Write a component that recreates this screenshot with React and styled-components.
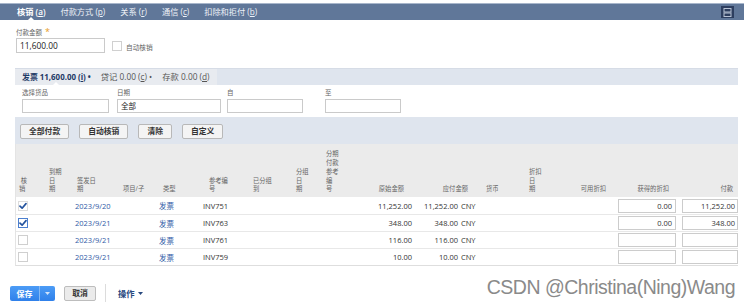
import React from 'react';
import styled, { createGlobalStyle } from 'styled-components';

const FONT = `"Open Sans", "Noto Sans CJK SC", sans-serif`;

const GlobalStyle = createGlobalStyle`
  html, body { margin: 0; padding: 0; background: #fff; }
  body { font-family: ${FONT}; color: #333; }
  * { box-sizing: border-box; }
  u { text-underline-offset: 1px; }
`;

const Page = styled.div`
  position: relative;
  width: 750px;
  height: 307px;
  padding-top: 3px;
  overflow: hidden;
`;

const TabBar = styled.div`
  display: flex;
  align-items: center;
  gap: 15px;
  height: 17px;
  margin-right: 6px;
  padding-left: 17px;
  background: #607799;
  border-top: 1px solid #a8b6cb;
`;

const Tab = styled.span`
  position: relative;
  font-size: 8.2px;
  line-height: 16px;
  white-space: nowrap;
  color: ${p => (p.$active ? '#ffffff' : '#eef2f8')};
  font-weight: ${p => (p.$active ? 600 : 400)};
  &::after {
    content: '';
    display: ${p => (p.$active ? 'block' : 'none')};
    position: absolute;
    left: 50%;
    bottom: 0;
    margin-left: -3px;
    border: 3px solid transparent;
    border-bottom-color: #fff;
  }
`;

const MenuButton = styled.div`
  margin-left: auto;
  margin-right: 10px;
  width: 13px;
  height: 12px;
  background: #2d3e5f;
  display: flex;
  align-items: center;
  justify-content: center;
`;

const Content = styled.div`
  padding: 0 12px 0 15px;
`;

const FormSection = styled.div`
  padding: 7px 0 15px 1px;
`;

const FieldLabel = styled.div`
  font-size: 6.5px;
  line-height: 9px;
  color: #666;
  white-space: nowrap;
`;

const Star = styled.span`
  color: #e89a1c;
  font-size: 9px;
  margin-left: 3px;
`;

const AmountRow = styled.div`
  display: flex;
  align-items: center;
  margin-top: 1px;
`;

const AmountInput = styled.div`
  width: 89px;
  height: 15px;
  border: 1px solid #cacaca;
  padding: 0 3px;
  font-size: 8.4px;
  line-height: 13px;
  color: #222;
`;

const PlainBox = styled.div`
  width: 10px;
  height: 10px;
  border: 1px solid #d0d0d0;
  margin-left: 7px;
  background: #fff;
`;

const CheckLabel = styled.span`
  font-size: 6.7px;
  color: #666;
  margin-left: 4px;
  margin-top: 2px;
`;

const SubSection = styled.div`
  border-top: 1px solid #d6dce6;
  background: #dfe5ee;
`;

const SubTabRow = styled.div`
  display: flex;
  height: 16px;
`;

const SubTabs = styled.div`
  display: flex;
  align-items: center;
  gap: 10px;
  width: 202px;
  padding-left: 7px;
  background: #e8ebf0;
`;

const SubTab = styled.span`
  position: relative;
  font-size: ${p => (p.$active ? 7.9 : 8.3)}px;
  line-height: 16px;
  white-space: nowrap;
  color: ${p => (p.$active ? '#1f3a66' : '#555')};
  font-weight: ${p => (p.$active ? 700 : 400)};
  &::after {
    content: '';
    display: ${p => (p.$active ? 'block' : 'none')};
    position: absolute;
    left: 50%;
    bottom: 0;
    margin-left: -3px;
    border: 3px solid transparent;
    border-bottom-color: #fff;
  }
`;

const FilterArea = styled.div`
  display: grid;
  grid-template-columns: 95px 110px 98px 76px;
  padding: 3px 0 4px 7px;
  background: #fff;
`;

const FilterField = styled.div`
  display: flex;
  flex-direction: column;
  gap: 2px;
`;

const FilterInput = styled.div`
  width: ${p => p.$w}px;
  height: 14px;
  border: 1px solid #cacaca;
  padding: 0 3px;
  font-size: 7.5px;
  line-height: 12px;
  color: #222;
`;

const ButtonRow = styled.div`
  display: flex;
  gap: 10px;
  padding: 7px 0 5px 5px;
`;

const GrayButton = styled.button`
  height: 15px;
  padding: 0 8px;
  font-family: ${FONT};
  font-size: 7.8px;
  font-weight: 600;
  color: #333;
  background: #f4f4f4;
  border: 1px solid #b8b8b8;
  border-radius: 2px;
  line-height: 13px;
`;

const COLS = '30px 26px 47px 36px 44px 46px 47px 30px 39px 52px 48px 60px 40px 52px 65px 61px';

const Table = styled.div`
  width: 723px;
  border-left: 1px solid #e4e4e4;
  border-bottom: 1px solid #dedede;
`;

const HeadRow = styled.div`
  display: grid;
  grid-template-columns: ${COLS};
  align-items: end;
  height: 53px;
  padding-bottom: 3px;
  background: #ebebeb;
`;

const HeadCell = styled.div`
  font-size: 6.3px;
  line-height: 8.7px;
  color: #666;
  white-space: nowrap;
  text-align: ${p => (p.$right ? 'right' : 'left')};
  padding-left: ${p => p.$pl || 0}px;
  padding-right: ${p => p.$pr || 0}px;
  margin-right: ${p => p.$mr || 0}px;
`;

const Row = styled.div`
  display: grid;
  grid-template-columns: ${COLS};
  align-items: center;
  height: 17px;
  background: #fff;
  border-top: ${p => (p.$first ? 'none' : '1px solid #e8e8e8')};
`;

const Cell = styled.div`
  font-size: 7.5px;
  white-space: nowrap;
  color: ${p => (p.$link ? '#2f5aa6' : '#333')};
  text-align: ${p => (p.$right ? 'right' : 'left')};
  padding-left: ${p => p.$pl || 0}px;
  padding-right: ${p => p.$pr || 0}px;
`;

const RowBox = styled.div`
  width: 10px;
  height: 10px;
  margin-left: 2px;
  border: 1px solid ${p => (p.$focus ? '#4b7fcf' : p.$checked ? '#dcdcdc' : '#cfcfcf')};
  background: #fff;
  display: flex;
  align-items: center;
  justify-content: center;
`;

const AmountBox = styled.div`
  width: ${p => p.$w}px;
  height: 14px;
  margin-left: ${p => p.$ml}px;
  border: 1px solid #cccccc;
  background: #fff;
  padding-right: ${p => p.$pr}px;
  font-size: 7.5px;
  line-height: 12px;
  text-align: right;
  color: #333;
`;

const Footer = styled.div`
  display: flex;
  align-items: center;
  height: 22px;
  margin-top: 16px;
  padding-left: 10px;
`;

const SaveButton = styled.div`
  display: flex;
  height: 15px;
  width: 45px;
  border-radius: 2px;
  background: linear-gradient(#4c9cf6, #2f80ea);
  color: #fff;
  font-size: 8px;
  font-weight: 600;
  overflow: hidden;
`;

const SaveMain = styled.span`
  width: 30px;
  text-align: center;
  line-height: 15px;
  border-right: 1px solid #86b9f5;
`;

const SaveArrow = styled.span`
  flex: 1;
  display: flex;
  align-items: center;
  justify-content: center;
`;

const CancelButton = styled.div`
  margin-left: 9px;
  width: 32px;
  height: 15px;
  border: 1px solid #bdbdbd;
  border-radius: 2px;
  background: #ebebeb;
  font-size: 7.8px;
  font-weight: 600;
  line-height: 13px;
  text-align: center;
  color: #333;
`;

const Separator = styled.div`
  margin-left: 9px;
  width: 1px;
  height: 18px;
  background: #dcdcdc;
`;

const ActionMenu = styled.div`
  margin-left: 12px;
  display: flex;
  align-items: center;
  gap: 3px;
  font-size: 8.3px;
  font-weight: 600;
  color: #28497f;
`;

const Watermark = styled.div`
  position: absolute;
  right: 15px;
  top: 278px;
  font-family: "Liberation Sans", Arial, sans-serif;
  font-size: 19.5px;
  letter-spacing: -0.5px;
  line-height: 1;
  color: #8a8a8a;
  white-space: nowrap;
`;

const Check = ({ color = '#24539e' }) => (
  <svg width="8" height="8" viewBox="0 0 8 8">
    <path d="M1 4.2 L3.1 6.2 L7 1.6" fill="none" stroke={color} strokeWidth="1.7" strokeLinecap="round" strokeLinejoin="round" />
  </svg>
);

const Caret = ({ color }) => (
  <svg width="5" height="3" viewBox="0 0 5 3">
    <path d="M0 0 H5 L2.5 3 Z" fill={color} />
  </svg>
);

const headers = [
  { lines: ['\u00a0核', '销'], pl: 3 },
  { lines: ['到期', '日', '期'], pl: 3 },
  { lines: ['签发日', '期'], pl: 5 },
  { lines: ['项目/子'], pl: 4 },
  { lines: ['类型'], pl: 8 },
  { lines: ['参考编', '号'], pl: 10 },
  { lines: ['已分组', '到'], pl: 8 },
  { lines: ['分组', '日', '期'], pl: 4 },
  { lines: ['分期', '付款', '参考', '编', '号'], pl: 4 },
  { lines: ['原始金额'], right: true, pr: 9 },
  { lines: ['应付金额'], right: true, mr: -7 },
  { lines: ['货币'], pl: 25 },
  { lines: ['折扣', '日', '期'], pl: 8 },
  { lines: ['可用折扣'], right: true, pr: 7 },
  { lines: ['获得的折扣'], right: true, pr: 9 },
  { lines: ['付款'], right: true, pr: 6 },
];

const rows = [
  { checked: true, date: '2023/9/20', ref: 'INV751', orig: '11,252.00', due: '11,252.00', disc: '0.00', pay: '11,252.00' },
  { checked: true, focus: true, date: '2023/9/21', ref: 'INV763', orig: '348.00', due: '348.00', disc: '0.00', pay: '348.00' },
  { date: '2023/9/21', ref: 'INV761', orig: '116.00', due: '116.00', disc: '', pay: '' },
  { date: '2023/9/21', ref: 'INV759', orig: '10.00', due: '10.00', disc: '', pay: '' },
];

const tabs = [
  ['核销', 'a'],
  ['付款方式', 'p'],
  ['关系', 'r'],
  ['通信', 'c'],
  ['扣除和拒付', 'b'],
];

export default function App() {
  return (
    <Page>
      <GlobalStyle />
      <TabBar>
        {tabs.map(([t, k], i) => (
          <Tab key={k} $active={i === 0}>
            {t} (<u>{k}</u>)
          </Tab>
        ))}
        <MenuButton>
          <svg width="9" height="9" viewBox="0 0 9 9">
            <rect x="1" y="0.5" width="7" height="3.5" fill="none" stroke="#b7c1d3" strokeWidth="1" />
            <rect x="1" y="5" width="7" height="3.5" fill="none" stroke="#b7c1d3" strokeWidth="1" />
          </svg>
        </MenuButton>
      </TabBar>

      <Content>
        <FormSection>
          <FieldLabel>
            付款金额<Star>*</Star>
          </FieldLabel>
          <AmountRow>
            <AmountInput>11,600.00</AmountInput>
            <PlainBox />
            <CheckLabel>自动核销</CheckLabel>
          </AmountRow>
        </FormSection>

        <SubSection>
          <SubTabRow>
            <SubTabs>
              <SubTab $active>
                发票 11,600.00 (<u>i</u>) •
              </SubTab>
              <SubTab>
                贷记 0.00 (<u>c</u>) •
              </SubTab>
              <SubTab>
                存款 0.00 (<u>d</u>)
              </SubTab>
            </SubTabs>
          </SubTabRow>
          <FilterArea>
            <FilterField>
              <FieldLabel>选择货品</FieldLabel>
              <FilterInput $w={87} />
            </FilterField>
            <FilterField>
              <FieldLabel>日期</FieldLabel>
              <FilterInput $w={104}>全部</FilterInput>
            </FilterField>
            <FilterField>
              <FieldLabel>自</FieldLabel>
              <FilterInput $w={76} />
            </FilterField>
            <FilterField>
              <FieldLabel>至</FieldLabel>
              <FilterInput $w={76} />
            </FilterField>
          </FilterArea>
          <ButtonRow>
            <GrayButton>全部付款</GrayButton>
            <GrayButton>自动核销</GrayButton>
            <GrayButton>清除</GrayButton>
            <GrayButton>自定义</GrayButton>
          </ButtonRow>
        </SubSection>

        <Table>
          <HeadRow>
            {headers.map((h, i) => (
              <HeadCell key={i} $pl={h.pl} $pr={h.pr} $mr={h.mr} $right={h.right}>
                {h.lines.map((l, j) => (
                  <div key={j}>{l}</div>
                ))}
              </HeadCell>
            ))}
          </HeadRow>
          {rows.map((r, i) => (
            <Row key={r.ref} $first={i === 0}>
              <Cell>
                <RowBox $checked={r.checked} $focus={r.focus}>
                  {r.checked && <Check />}
                </RowBox>
              </Cell>
              <Cell />
              <Cell $link $pl={3}>{r.date}</Cell>
              <Cell />
              <Cell $link $pl={4}>发票</Cell>
              <Cell $pl={4}>{r.ref}</Cell>
              <Cell />
              <Cell />
              <Cell />
              <Cell $right $pr={1}>{r.orig}</Cell>
              <Cell $right $pr={3}>{r.due}</Cell>
              <Cell>CNY</Cell>
              <Cell />
              <Cell />
              <Cell>
                <AmountBox $w={58} $ml={5} $pr={3}>{r.disc}</AmountBox>
              </Cell>
              <Cell>
                <AmountBox $w={56} $ml={4} $pr={2}>{r.pay}</AmountBox>
              </Cell>
            </Row>
          ))}
        </Table>
      </Content>

      <Footer>
        <SaveButton>
          <SaveMain>保存</SaveMain>
          <SaveArrow>
            <Caret color="#d2e4fb" />
          </SaveArrow>
        </SaveButton>
        <CancelButton>取消</CancelButton>
        <Separator />
        <ActionMenu>
          操作
          <Caret color="#28497f" />
        </ActionMenu>
      </Footer>

      <Watermark>CSDN @Christina(Ning)Wang</Watermark>
    </Page>
  );
}
